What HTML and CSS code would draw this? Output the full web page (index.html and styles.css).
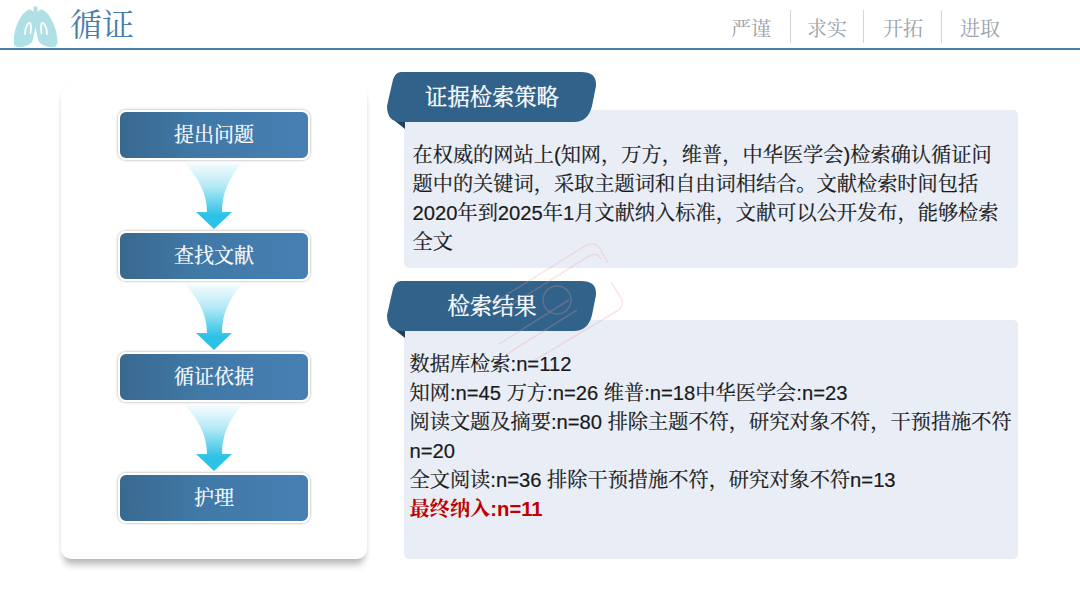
FILE: index.html
```html
<!DOCTYPE html>
<html lang="zh-CN">
<head>
<meta charset="utf-8">
<title>循证</title>
<link rel="stylesheet" href="styles.css">
</head>
<body>
<header class="header">
  <div class="brand">
    <svg class="lungs" viewBox="0 0 44 42" width="44" height="42">
      <path fill="#aee0e6" d="M19.500 .5H23.500V6C25 4 27 3 29 4C36 7 43 22 43.500 35C43.500 40 41 41 38 41C33 41 27.500 39 25 36C23.500 33 23 27 21.500 21C20 27 19.500 33 18 36C15.500 39 10 41 5 41C2 41 -.5 40 -.5 35C0 22 7 7 14 4C16 3 18 4 19.500 6Z"/>
      <g fill="none" stroke="#fff" stroke-width="1.800" stroke-linecap="round">
        <path d="M11 28C11 21 14 17 15.500 17C17 17 17.500 22 16.500 27"/>
        <path d="M33 28C33 21 30 17 28.500 17C27 17 26.500 22 27.500 27"/>
      </g>
    </svg>
    <span class="brand-title">循证</span>
  </div>
  <nav class="nav">
    <span class="nav-item">严谨</span>
    <span class="nav-item">求实</span>
    <span class="nav-item">开拓</span>
    <span class="nav-item">进取</span>
  </nav>
</header>

<main class="main">
  <aside class="flow-card">
    <div class="step">提出问题</div>
    <svg class="arrow" viewBox="0 0 60 66" width="60" height="66">
      <defs>
        <linearGradient id="arrowFill" x1="0" y1="0" x2="0" y2="1">
          <stop offset="0" stop-color="#2cc1e6" stop-opacity=".04"/>
          <stop offset=".35" stop-color="#2cc1e6" stop-opacity=".35"/>
          <stop offset=".8" stop-color="#2cc1e6"/>
        </linearGradient>
      </defs>
      <path fill="url(#arrowFill)" d="M1 0H58C45 15 38 30 38 49H48L30 66 12 49H23C23 30 14 15 1 0Z"/>
    </svg>
    <div class="step">查找文献</div>
    <svg class="arrow" viewBox="0 0 60 66" width="60" height="66">
      <path fill="url(#arrowFill)" d="M1 0H58C45 15 38 30 38 49H48L30 66 12 49H23C23 30 14 15 1 0Z"/>
    </svg>
    <div class="step">循证依据</div>
    <svg class="arrow" viewBox="0 0 60 66" width="60" height="66">
      <path fill="url(#arrowFill)" d="M1 0H58C45 15 38 30 38 49H48L30 66 12 49H23C23 30 14 15 1 0Z"/>
    </svg>
    <div class="step">护理</div>
  </aside>

  <div class="content">
    <section class="block">
      <div class="tab">
        <svg class="tab-shape" viewBox="0 0 210 57" width="210" height="57">
          <path fill="#1f3f5c" d="M8 49H18V57Z"/>
          <path fill="#30628a" d="M14 0H194Q210 0 209 14L205 34Q201 50 187 50H14Q0 50 0 34L5 12Q7 0 14 0Z"/>
        </svg>
        <span class="tab-label">证据检索策略</span>
      </div>
      <div class="panel panel-first">
        <p class="line">在权威的网站上(知网，万方，维普，中华医学会)检索确认循证问</p>
        <p class="line">题中的关键词，采取主题词和自由词相结合。文献检索时间包括</p>
        <p class="line">2020年到2025年1月文献纳入标准，文献可以公开发布，能够检索</p>
        <p class="line">全文</p>
      </div>
    </section>

    <section class="block block-results">
      <div class="tab">
        <svg class="tab-shape" viewBox="0 0 210 57" width="210" height="57">
          <path fill="#1f3f5c" d="M8 49H18V57Z"/>
          <path fill="#30628a" d="M14 0H194Q210 0 209 14L205 34Q201 50 187 50H14Q0 50 0 34L5 12Q7 0 14 0Z"/>
        </svg>
        <span class="tab-label">检索结果</span>
      </div>
      <div class="panel panel-second">
        <p class="line">数据库检索:n=112</p>
        <p class="line">知网:n=45 万方:n=26 维普:n=18中华医学会:n=23</p>
        <p class="line">阅读文题及摘要:n=80 排除主题不符，研究对象不符，干预措施不符</p>
        <p class="line">n=20</p>
        <p class="line">全文阅读:n=36 排除干预措施不符，研究对象不符n=13</p>
        <p class="line line-final">最终纳入:n=11</p>
      </div>
    </section>
  </div>
</main>

<svg class="watermark" viewBox="0 0 140 130" width="140" height="130">
  <g fill="none" stroke="#f09a9a" stroke-width="1.500">
    <path d="M10 70 100 14q10-5 15 3l8 14"/>
    <path d="M18 78 104 24q8-4 12 3"/>
    <circle cx="72" cy="68" r="14"/>
    <path d="M126 50l10 16q4 8-4 13L50 128"/>
    <path d="M14 112l70-44M22 122l70-44"/>
  </g>
</svg>
</body>
</html>
```
FILE: styles.css
```css
* { box-sizing: border-box; }

html, body { margin: 0; padding: 0; }

body {
  position: relative;
  width: 1080px;
  height: 608px;
  overflow: hidden;
  background: #fff;
  font-family: "Liberation Sans", "Noto Serif CJK SC", "Noto Sans CJK SC", sans-serif;
  color: #1a1a1a;
}

.header {
  display: flex;
  justify-content: space-between;
  height: 50px;
  border-bottom: 2px solid #4a7eac;
  padding: 0 80px 0 14px;
}

.brand {
  display: flex;
  align-items: center;
  gap: 13px;
}

.lungs { margin-top: 5px; }

.brand-title {
  font-size: 32px;
  line-height: 48px;
  color: #4a7dab;
  margin-top: 2px;
  margin-left: -1px;
}

.nav {
  display: flex;
  align-items: center;
  height: 48px;
  padding-top: 10px;
  padding-bottom: 5px;
}

.nav-item {
  display: flex;
  align-items: center;
  height: 33px;
  font-size: 20px;
  color: #98a2ab;
  padding: 2px 18px 0 19px;
  border-left: 1px solid #d4d4d4;
}

.nav-item:first-child { border-left: 0; padding-right: 19px; }
.nav-item:nth-child(2) { padding-left: 16px; padding-right: 16px; }
.nav-item:last-child { padding-left: 18px; padding-right: 0; }

.main {
  display: flex;
  align-items: flex-start;
  gap: 20px;
  padding: 22px 0 0 61px;
}

.flow-card {
  display: flex;
  flex-direction: column;
  align-items: center;
  width: 306px;
  height: 474px;
  margin-top: 13px;
  padding-top: 25px;
  background: #fff;
  border-radius: 10px;
  box-shadow: 0 9px 7px -3px rgba(0, 0, 0, .24), 0 2px 5px rgba(0, 0, 0, .07);
}

.step {
  display: flex;
  align-items: center;
  justify-content: center;
  flex: none;
  width: 192px;
  height: 50px;
  padding-bottom: 4px;
  border: 2px solid #fff;
  border-radius: 8px;
  background: linear-gradient(90deg, #39698f 0%, #4078a6 40%, #4680b3 100%);
  box-shadow: 0 0 2px 1px rgba(0, 0, 0, .18);
  color: #fff;
  font-size: 20px;
  -webkit-text-stroke: .2px #fff;
}

.arrow {
  flex: none;
  display: block;
  margin: 3px 0 2px;
}

.content {
  display: flex;
  flex-direction: column;
  width: 631px;
}

.block-results { margin-top: 13px; }

.tab {
  position: relative;
  z-index: 1;
  display: flex;
  align-items: center;
  justify-content: center;
  width: 210px;
  height: 50px;
  padding-bottom: 4px;
  color: #fff;
  font-size: 22.300px;
  -webkit-text-stroke: .3px #fff;
}

.tab-shape {
  position: absolute;
  left: 0;
  top: 0;
}

.tab-label { position: relative; }

.panel {
  margin-left: 17px;
  background: #e9eef6;
  border-radius: 5px;
  font-size: 20.220px;
  line-height: 29px;
  -webkit-text-stroke: .2px #1a1a1a;
}

.panel-first {
  height: 158px;
  margin-top: -12px;
  padding: 31px 0 0 8.500px;
}

.panel-second {
  height: 239px;
  margin-top: -11px;
  padding: 29.500px 0 0 5.500px;
}

.line { margin: 0; white-space: nowrap; }

.line-final {
  color: #c00000;
  font-weight: 700;
  -webkit-text-stroke: 0;
}

.watermark {
  position: absolute;
  left: 485px;
  top: 232px;
  z-index: 2;
  opacity: .25;
  filter: blur(.6px);
  pointer-events: none;
}
```
